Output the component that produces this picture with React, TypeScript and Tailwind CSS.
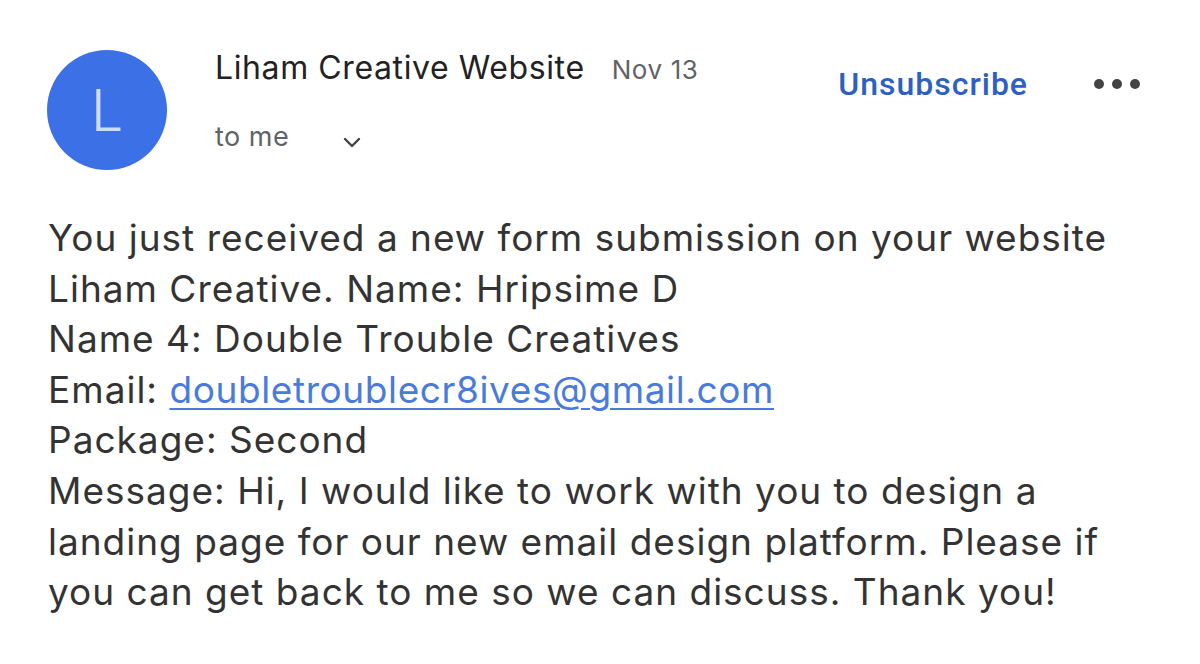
import React from 'react';

export default function App() {
  return (
    <div className="w-[1200px] h-[664px] bg-white overflow-hidden" style={{ fontFamily: 'Inter, "Noto Sans", sans-serif' }}>
      {/* Header */}
      <div className="flex items-start pl-[47px] pr-[60px] pt-[50px]">
        <div className="w-[120px] h-[120px] rounded-full bg-[#3b70e6] flex items-center justify-center shrink-0">
          <span className="text-[58px] leading-none text-[#cfdcf7] font-light">L</span>
        </div>
        <div className="ml-[48px] flex flex-col">
          <div className="flex items-baseline gap-[27px]">
            <span className="text-[32px] leading-[36px] tracking-[0.6px] text-[#222]">Liham Creative Website</span>
            <span className="text-[26px] leading-[36px] tracking-[0.6px] text-[#5f6368]">Nov 13</span>
          </div>
          <div className="flex items-center mt-[34px]">
            <span className="text-[27px] leading-[30px] tracking-[0.5px] text-[#5f6368]">to me</span>
            <svg className="ml-[54px] mt-[12px]" width="18" height="12" viewBox="0 0 18 12" fill="none">
              <path d="M2 2 L9 9 L16 2" stroke="#444" strokeWidth="2.4" strokeLinecap="round" strokeLinejoin="round" />
            </svg>
          </div>
        </div>
        <div className="ml-auto flex items-center mt-[14px]">
          <span className="text-[32px] leading-[40px] tracking-[1px] text-[#2d5fc4] font-medium" style={{ fontFamily: 'Roboto, sans-serif' }}>Unsubscribe</span>
          <div className="flex gap-[8px] ml-[66px]">
            <span className="w-[10px] h-[10px] rounded-full bg-[#444]" />
            <span className="w-[10px] h-[10px] rounded-full bg-[#444]" />
            <span className="w-[10px] h-[10px] rounded-full bg-[#444]" />
          </div>
        </div>
      </div>

      {/* Body */}
      <div className="pl-[48px] pr-[10px] mt-[43px] text-[37px] leading-[50.6px] tracking-[1px] text-[#333]">
        <div>You just received a new form submission on your website</div>
        <div>Liham Creative. Name: Hripsime D</div>
        <div>Name 4: Double Trouble Creatives</div>
        <div>
          Email: <a href="#" className="text-[#4a7bdc] tracking-[0.6px] underline underline-offset-[5px] decoration-[1.5px]">doubletroublecr8ives@gmail.com</a>
        </div>
        <div>Package: Second</div>
        <div>Message: Hi, I would like to work with you to design a</div>
        <div>landing page for our new email design platform. Please if</div>
        <div>you can get back to me so we can discuss. Thank you!</div>
      </div>
    </div>
  );
}
